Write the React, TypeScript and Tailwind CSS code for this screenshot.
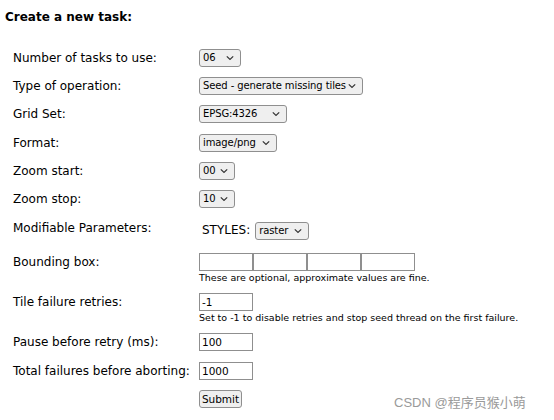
import React from "react";

const font = "font-['DejaVu_Sans',Verdana,sans-serif]";

function Chevron() {
  return (
    <svg width="8" height="5" viewBox="0 0 8 5" className="pointer-events-none absolute right-[6px] top-1/2 -translate-y-1/2">
      <path d="M0.8 0.8 L4 4 L7.2 0.8" fill="none" stroke="#333" strokeWidth="1.2" />
    </svg>
  );
}

function Select({ value, width }: { value: string; width: string }) {
  return (
    <div
      role="combobox"
      className={`relative flex h-[18px] items-center rounded-[3px] border border-[#8f8f8f] bg-[#efefef] pl-[3px] pr-[16px] text-[10px] leading-none whitespace-nowrap text-black ${width}`}
    >
      <span className="tracking-[-0.1px]">{value}</span>
      <Chevron />
    </div>
  );
}

function TextInput({ value = "", className = "" }: { value?: string; className?: string }) {
  return (
    <input
      defaultValue={value}
      className={`h-[18px] w-[54px] border border-[#8f8f8f] bg-white px-[2px] text-[10.5px] leading-none text-black ${font} outline-none ${className}`}
    />
  );
}

function Row({ label, children, className = "", labelClass = "" }: { label: string; children: React.ReactNode; className?: string; labelClass?: string }) {
  return (
    <div className={`flex items-start ${className}`}>
      <div className={`w-[186px] shrink-0 text-[12px] leading-[18px] text-black ${labelClass}`}>{label}</div>
      <div className="flex flex-col">{children}</div>
    </div>
  );
}

export default function App() {
  return (
    <div className={`relative h-[420px] w-[554px] overflow-hidden bg-white ${font}`}>
      <div className="pl-[5px] pt-[9px] text-[12px] font-bold leading-[16px] text-black">Create a new task:</div>
      <div className="pl-[13px] pt-[24px]">
        <Row label="Number of tasks to use:">
          <Select value="06" width="w-[42px]" />
        </Row>
        <Row label="Type of operation:" className="mt-[10px]">
          <Select value="Seed - generate missing tiles" width="w-[164px]" />
        </Row>
        <Row label="Grid Set:" className="mt-[10px]">
          <Select value="EPSG:4326" width="w-[88px]" />
        </Row>
        <Row label="Format:" className="mt-[11px]">
          <Select value="image/png" width="w-[78px]" />
        </Row>
        <Row label="Zoom start:" className="mt-[10px]">
          <Select value="00" width="w-[36px]" />
        </Row>
        <Row label="Zoom stop:" className="mt-[10px]">
          <Select value="10" width="w-[36px]" />
        </Row>
        <Row label="Modifiable Parameters:" className="mt-[14px]" labelClass="-mt-[3px]">
          <div className="flex items-center">
            <span className="-mt-[2px] pl-[3px] pr-[5px] text-[12px] leading-[18px]">STYLES:</span>
            <Select value="raster" width="w-[54px]" />
          </div>
        </Row>
        <Row label="Bounding box:" className="mt-[13px]">
          <div className="flex">
            <TextInput />
            <TextInput />
            <TextInput />
            <TextInput />
          </div>
          <div className="mt-[1px] text-[9.5px] leading-[12px]">These are optional, approximate values are fine.</div>
        </Row>
        <Row label="Tile failure retries:" className="mt-[9px]">
          <TextInput value="-1" />
          <div className="mt-[1px] text-[9.5px] leading-[12px]">Set to -1 to disable retries and stop seed thread on the first failure.</div>
        </Row>
        <Row label="Pause before retry (ms):" className="mt-[9px]">
          <TextInput value="100" />
        </Row>
        <Row label="Total failures before aborting:" className="mt-[11px]">
          <TextInput value="1000" />
        </Row>
        <Row label="" className="mt-[10px]">
          <button className={`flex h-[18px] w-[43px] items-center justify-center rounded-[3px] border border-[#8f8f8f] bg-[#efefef] text-[10.5px] leading-none text-black ${font}`}>
            Submit
          </button>
        </Row>
      </div>
      <div className="absolute left-[394px] top-[395px] font-['Liberation_Sans','Noto_Sans_CJK_SC',sans-serif] text-[13px] leading-[16px] text-[#9a9a9a]">
        CSDN @程序员猴小萌
      </div>
    </div>
  );
}
